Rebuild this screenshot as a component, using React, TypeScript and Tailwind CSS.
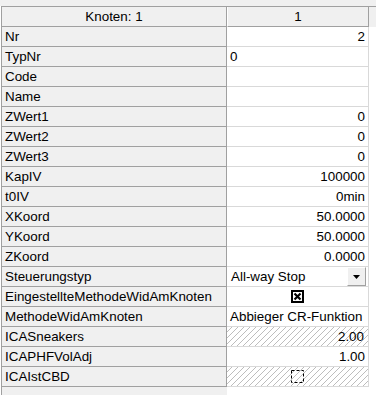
const rows: { label: string; value?: string; kind?: "left" | "right" | "select" | "check" | "hatchNum" | "hatchCheck" }[] = [
  { label: "Nr", value: "2", kind: "right" },
  { label: "TypNr", value: "0", kind: "left" },
  { label: "Code", value: "", kind: "left" },
  { label: "Name", value: "", kind: "left" },
  { label: "ZWert1", value: "0", kind: "right" },
  { label: "ZWert2", value: "0", kind: "right" },
  { label: "ZWert3", value: "0", kind: "right" },
  { label: "KapIV", value: "100000", kind: "right" },
  { label: "t0IV", value: "0min", kind: "right" },
  { label: "XKoord", value: "50.0000", kind: "right" },
  { label: "YKoord", value: "50.0000", kind: "right" },
  { label: "ZKoord", value: "0.0000", kind: "right" },
  { label: "Steuerungstyp", value: "All-way Stop", kind: "select" },
  { label: "EingestellteMethodeWidAmKnoten", kind: "check" },
  { label: "MethodeWidAmKnoten", value: "Abbieger CR-Funktion", kind: "left" },
  { label: "ICASneakers", value: "2.00", kind: "hatchNum" },
  { label: "ICAPHFVolAdj", value: "1.00", kind: "right" },
  { label: "ICAIstCBD", kind: "hatchCheck" },
];

// diagonal hatch for read-only cells
const hatch =
  "bg-[repeating-linear-gradient(135deg,#ffffff_0px,#ffffff_3.2px,#bdbdbd_3.2px,#bdbdbd_4.24px)]";

const ValueCell = ({ row }: { row: (typeof rows)[number] }) => {
  const base = "h-[20px] w-[142px] border-b border-r border-[#d9d9d9] flex items-center whitespace-nowrap overflow-hidden";
  if (row.kind === "select") {
    return (
      <div className={`${base} bg-white pl-[4px] pr-[2px] justify-between`}>
        <span>{row.value}</span>
        <div className="h-[19px] w-[19px] bg-[#f0f0f0] border-t border-l border-white border-r border-b border-r-[#a0a0a0] border-b-[#a0a0a0] flex items-center justify-center">
          <svg width="7" height="4" viewBox="0 0 7 4">
            <path d="M0 0h7L3.5 4z" fill="#000" />
          </svg>
        </div>
      </div>
    );
  }
  if (row.kind === "check") {
    return (
      <div className={`${base} bg-white justify-center`}>
        <svg width="13" height="13" viewBox="0 0 13 13">
          <rect x="1" y="1" width="11" height="11" fill="#fff" stroke="#000" strokeWidth="2" />
          <path d="M3.5 3.5l6 6M9.5 3.5l-6 6" stroke="#000" strokeWidth="2.2" />
        </svg>
      </div>
    );
  }
  if (row.kind === "hatchCheck") {
    return (
      <div className={`${base} ${hatch} justify-center`}>
        <svg width="13" height="13" viewBox="0 0 13 13">
          <rect x="0.5" y="0.5" width="12" height="12" fill="none" stroke="#000" strokeWidth="1" strokeDasharray="3 2" />
        </svg>
      </div>
    );
  }
  if (row.kind === "hatchNum") {
    return <div className={`${base} ${hatch} justify-end pr-[4px]`}>{row.value}</div>;
  }
  return (
    <div className={`${base} bg-white pr-[3px] pl-[3px] ${row.kind === "right" ? "justify-end" : "justify-start"}`}>
      {row.value}
    </div>
  );
};

export default function App() {
  return (
    <div className="w-[376px] h-[395px] bg-white overflow-hidden text-[13.4px] text-black font-['Liberation_Sans',Arial,sans-serif] leading-none">
      <div className="h-[6px] bg-[#f0f0f0]" />
      <div className="ml-[1px] border-l border-[#a0a0a0] h-[389px] flex flex-col">
        <div className="flex border-t border-[#a0a0a0]">
          <div className="h-[20px] w-[225px] bg-[#f0f0f0] border-b border-r border-[#a0a0a0] flex items-center justify-center">
            Knoten: 1
          </div>
          <div className="h-[20px] w-[142px] bg-[#f0f0f0] border-l border-l-white border-b border-r border-[#a0a0a0] flex items-center justify-center">
            1
          </div>
          <div className="flex-1 bg-[#f0f0f0]" />
        </div>
        {rows.map((row, idx) => (
          <div key={idx} className="flex">
            <div className="h-[20px] w-[225px] bg-[#f0f0f0] border-b border-r border-[#a0a0a0] flex items-center pl-[3px] whitespace-nowrap">
              {row.label}
            </div>
            <ValueCell row={row} />
          </div>
        ))}
        <div className="flex flex-1">
          <div className="w-[225px] bg-[#f0f0f0]" />
        </div>
      </div>
    </div>
  );
}
